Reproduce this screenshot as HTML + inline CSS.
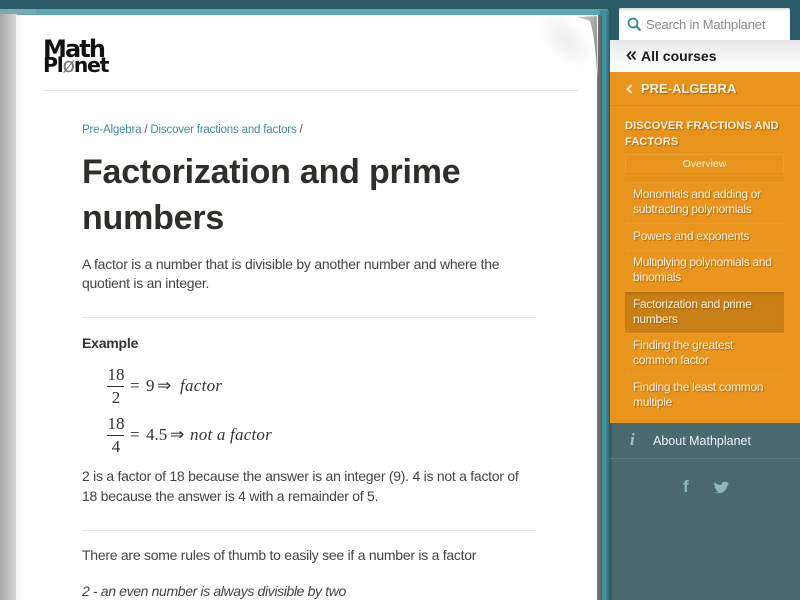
<!DOCTYPE html>
<html><head><meta charset="utf-8">
<style>
html,body{margin:0;padding:0;width:800px;height:600px;overflow:hidden;background:#4a6a70;font-family:"Liberation Sans",sans-serif}
.a{position:absolute;white-space:nowrap}
.nav{position:absolute;left:625px;width:159px;background:#ea951e;border-top:1px solid #eb9c2c;box-sizing:border-box}
.n{position:absolute;left:633px;color:#fff3dc;font-size:12px;letter-spacing:-.3px;line-height:15px;white-space:nowrap;text-shadow:1px 1px 1px rgba(120,70,0,.6)}
.p{color:#444;font-size:14px;letter-spacing:-.26px;position:absolute;left:82px;white-space:nowrap}
.hr{position:absolute;height:1px;background:#e6e6e6}
.m{font-family:"Liberation Serif",serif;font-size:17px;line-height:20px;color:#333;position:absolute;white-space:nowrap}
</style></head>
<body>
<div class="a" style="left:0;top:0;width:800px;height:600px;background:#4a6a70"></div>
<div class="a" style="left:0;top:0;width:800px;height:9px;background:#2b5b66"></div>
<div class="a" style="left:608px;top:9px;width:192px;height:31px;background:#2b5b66"></div>
<div class="a" style="left:609px;top:40px;width:3px;height:560px;background:#3c5a60"></div>
<div class="a" style="left:0;top:9px;width:609px;height:6px;background:#5ba6b6;border-radius:0 4px 0 0"></div>
<div class="a" style="left:0;top:9px;width:36px;height:5px;background:#7fa9b0"></div>
<div class="a" style="left:600px;top:10px;width:9px;height:590px;background:linear-gradient(90deg,#3e8a9b,#44919f 60%,#2f6a78);border-radius:0 4px 0 0"></div>
<div class="a" style="left:0;top:14px;width:17px;height:586px;background:linear-gradient(90deg,#a8a8a8,#bdbdbd 40%,#d4d4d4)"></div>
<div class="a" style="left:597px;top:16px;width:5px;height:584px;background:linear-gradient(90deg,#7a7a7a,#5c5c5c)"></div>
<div class="a" style="left:16px;top:15px;width:581px;height:585px;background:#fff;box-shadow:inset 8px 0 8px -6px #eee"></div>
<svg class="a" style="left:530px;top:8px" width="72" height="100" viewBox="0 0 72 100">
<defs>
<radialGradient id="s" cx=".5" cy=".5" r=".5"><stop offset="0" stop-color="#efefef"/><stop offset=".5" stop-color="#f5f5f5"/><stop offset="1" stop-color="#fff"/></radialGradient>
<linearGradient id="g" x1="0" y1="0" x2="1" y2="1"><stop offset="0" stop-color="#d2d2d2"/><stop offset="1" stop-color="#7a7a7a"/></linearGradient>
<clipPath id="cp"><rect x="0" y="7" width="72" height="93"/></clipPath>
</defs>
<path d="M20 7L68 7L68 70C67 45 65 25 60 13C46 11 32 9 20 7Z" fill="#fff"/>
<g clip-path="url(#cp)"><ellipse cx="36" cy="32" rx="34" ry="20" transform="rotate(45 36 32)" fill="url(#s)"/></g>
<path d="M46 9L67 8L67.500 70C66 45 64 26 60 13C55 11 50 10 46 9Z" fill="url(#g)"/>
</svg>
<!-- logo -->
<div class="a" style="left:43px;top:37px;font:bold 24px/24px 'DejaVu Sans',sans-serif;color:#111;letter-spacing:-1.9px">Math</div>
<div class="a" style="left:43px;top:54px;font:bold 20.5px/22px 'DejaVu Sans',sans-serif;color:#111;letter-spacing:-1.3px">Pl<span style="font-weight:normal;color:#777">ø</span>net</div>
<div class="hr" style="left:43px;top:90px;width:535px"></div>
<div class="a" style="left:82px;top:124px;font-size:11.5px;color:#3f8ca3;letter-spacing:-.18px">Pre-Algebra <span style="color:#555">/</span> Discover fractions and factors <span style="color:#555">/</span></div>
<div class="a" style="left:82px;top:149px;font-size:34px;line-height:46px;font-weight:bold;color:#2e2e2a;letter-spacing:-.22px;white-space:normal;width:420px">Factorization and prime numbers</div>
<div class="p" style="top:256px;letter-spacing:-.23px">A factor is a number that is divisible by another number and where the</div>
<div class="p" style="top:275px">quotient is an integer.</div>
<div class="hr" style="left:82px;top:317px;width:453px"></div>
<div class="p" style="top:335px;font-weight:bold;color:#333;letter-spacing:-.2px">Example</div>
<!-- math -->
<div class="m" style="left:107px;top:365px;width:18px;text-align:center">18</div>
<div class="a" style="left:107px;top:386px;width:17px;height:1px;background:#333"></div>
<div class="m" style="left:107px;top:388px;width:18px;text-align:center">2</div>
<div class="m" style="left:130px;top:376px">=</div>
<div class="m" style="left:146px;top:376px">9</div>
<div class="m" style="left:157px;top:376px">⇒</div>
<div class="m" style="left:180px;top:376px"><i style="letter-spacing:.27px">factor</i></div>
<div class="m" style="left:107px;top:414px;width:18px;text-align:center">18</div>
<div class="a" style="left:107px;top:435px;width:17px;height:1px;background:#333"></div>
<div class="m" style="left:107px;top:437px;width:18px;text-align:center">4</div>
<div class="m" style="left:130px;top:425px">=</div>
<div class="m" style="left:146px;top:425px">4.5</div>
<div class="m" style="left:170px;top:425px">⇒</div>
<div class="m" style="left:190px;top:425px"><i style="letter-spacing:.22px">not a factor</i></div>
<div class="p" style="top:468px">2 is a factor of 18 because the answer is an integer (9). 4 is not a factor of</div>
<div class="p" style="top:488px">18 because the answer is 4 with a remainder of 5.</div>
<div class="hr" style="left:82px;top:530px;width:453px"></div>
<div class="p" style="top:547px">There are some rules of thumb to easily see if a number is a factor</div>
<div class="p" style="top:583px;font-style:italic;letter-spacing:-.36px">2 - an even number is always divisible by two</div>
<!-- search -->
<div class="a" style="left:619px;top:8px;width:171px;height:33px;background:#fff;border-radius:2px 2px 0 0;box-shadow:inset 0 2px 2px #ddd"></div>
<svg class="a" style="left:627px;top:17px" width="15" height="15" viewBox="0 0 15 15"><circle cx="6" cy="6" r="4.5" fill="none" stroke="#2487a5" stroke-width="1.7"/><path d="M9.3 9.3L13.5 13.5" stroke="#2487a5" stroke-width="2"/></svg>
<div class="a" style="left:646px;top:17px;font-size:13px;letter-spacing:-.18px;color:#8a8a8a">Search in Mathplanet</div>
<!-- all courses -->
<div class="a" style="left:610px;top:40px;width:190px;height:32px;background:linear-gradient(#e9e9e9,#fff)"></div>
<svg class="a" style="left:626px;top:50px" width="11" height="11" viewBox="0 0 11 11"><path d="M5 1.500L1.500 5.500L5 9.500M9.500 1.500L6 5.500L9.500 9.500" fill="none" stroke="#222" stroke-width="1.800"/></svg>
<div class="a" style="left:641px;top:48px;font-size:14px;font-weight:bold;color:#1a1a1a">All courses</div>
<!-- orange -->
<div class="a" style="left:610px;top:72px;width:190px;height:351px;background:#e8931b"></div>
<div class="a" style="left:610px;top:105px;width:190px;height:1px;background:#d98a1a"></div>
<svg class="a" style="left:626px;top:84px" width="7" height="10" viewBox="0 0 7 10"><path d="M5.500 1L1.500 5L5.500 9" fill="none" stroke="#fff3dc" stroke-width="1.800"/></svg>
<div class="a" style="left:641px;top:81px;font-size:13px;font-weight:bold;color:#fff3dc;text-shadow:1px 1px 1px rgba(120,70,0,.6)">PRE-ALGEBRA</div>
<div class="a" style="left:625px;top:118px;font-size:11.2px;line-height:16px;font-weight:bold;color:#fff3dc;text-shadow:1px 1px 1px rgba(120,70,0,.6)">DISCOVER FRACTIONS AND<br>FACTORS</div>
<div class="a" style="left:625px;top:154px;width:159px;height:20px;border:1px solid #eea02f;border-bottom-color:#dd8b1a;box-sizing:border-box;font-size:10.5px;line-height:18px;text-align:center;color:#fff3dc">Overview</div>
<div class="nav" style="top:182px;height:41px"></div>
<div class="nav" style="top:223px;height:27px"></div>
<div class="nav" style="top:250px;height:42px"></div>
<div class="nav" style="top:292px;height:41px;background:#c87f16;border-top:0;box-shadow:inset 0 3px 3px -2px #a96a10"></div>
<div class="nav" style="top:333px;height:41px"></div>
<div class="nav" style="top:374px;height:41px"></div>
<div class="n" style="top:187px">Monomials and adding or<br>subtracting polynomials</div>
<div class="n" style="top:229px">Powers and exponents</div>
<div class="n" style="top:255px">Multiplying polynomials and<br>binomials</div>
<div class="n" style="top:297px">Factorization and prime<br>numbers</div>
<div class="n" style="top:338px">Finding the greatest<br>common factor</div>
<div class="n" style="top:380px">Finding the least common<br>multiple</div>
<!-- about -->
<div class="a" style="left:610px;top:458px;width:190px;height:1px;background:#557a80"></div>
<div class="a" style="left:630px;top:430px;font:italic bold 17px 'Liberation Serif',serif;color:#9cc4c9">i</div>
<div class="a" style="left:653px;top:434px;font-size:12.5px;color:#e9f2f2">About Mathplanet</div>
<div class="a" style="left:683px;top:477px;font:bold 17px 'Liberation Sans',sans-serif;color:#8fb9bf">f</div>
<svg class="a" style="left:713px;top:481px" width="17" height="13" viewBox="0 0 17 13"><path d="M0 11C4 13 11 13 13.500 7C14 5 15 4 16.500 2.500L14.500 3C15 2 15 1.500 15.500 .8L13.500 1.500C11.500 0 8.500 1 8.500 4C6 4 3 3 1.500 1C.8 3 1.500 5 3 6L1.500 5.500C1.500 7 3 8.500 4.500 9L3 9C3.500 10 5 11 6 11C4 12 2 11.500 0 11Z" fill="#8fb9bf"/></svg>
</body></html>
